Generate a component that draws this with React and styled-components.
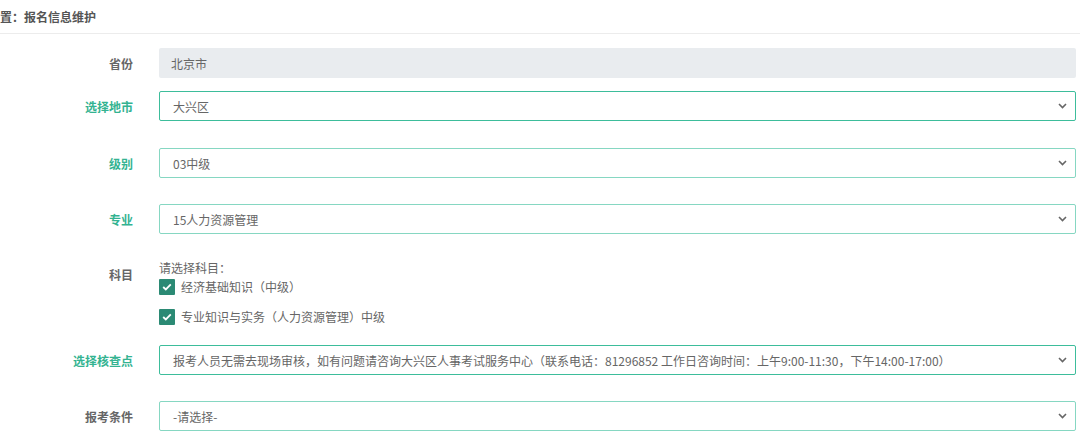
import React from 'react'
import styled, { createGlobalStyle } from 'styled-components'

const GlobalStyle = createGlobalStyle`
  body {
    margin: 0;
    background: #fff;
    font-family: "Noto Sans CJK SC", "Noto Sans", sans-serif;
    font-size: 12px;
    color: #555;
    text-spacing-trim: space-all;
  }
`

const Page = styled.div`
  width: 1080px;
  height: 444px;
  overflow: hidden;
`

const Crumb = styled.div`
  height: 33px;
  border-bottom: 1px solid #ececec;
  display: flex;
  align-items: center;
  font-size: 12px;
  font-weight: bold;
  color: #555;
  white-space: nowrap;
`

const Form = styled.div`
  padding-top: 14px;
  padding-right: 4px;
`

const Row = styled.div`
  display: flex;
  align-items: ${p => (p.$top ? 'flex-start' : 'center')};
  margin-bottom: ${p => p.$mb ?? 26}px;
`

const Label = styled.div`
  width: 133px;
  flex-shrink: 0;
  text-align: right;
  font-weight: bold;
  font-size: 12px;
  color: ${p => (p.$green ? '#34b391' : '#666')};
  padding-top: ${p => p.$pt || 0}px;
  margin-right: 26px;
`

const Input = styled.div`
  flex: 1;
  height: 30px;
  box-sizing: border-box;
  background: #e9ecef;
  border-radius: 2px;
  display: flex;
  align-items: center;
  padding: 0 12px;
  color: #666;
`

const Select = styled.div`
  flex: 1;
  height: 30px;
  box-sizing: border-box;
  border: 1.5px solid ${p => (p.$strong ? '#3dbd9b' : '#86d7c2')};
  border-radius: 2px;
  display: flex;
  align-items: center;
  justify-content: space-between;
  padding: 0 8px 0 13px;
  color: #666;
  white-space: nowrap;
`

const Chevron = () => (
  <svg width="9" height="6" viewBox="0 0 9 6">
    <path d="M1 1 L4.5 4.5 L8 1" fill="none" stroke="#666" strokeWidth="1.6" />
  </svg>
)

const Subjects = styled.div`
  display: flex;
  flex-direction: column;
`

const Hint = styled.div`
  color: #666;
  line-height: 16px;
  height: 16px;
`

const Check = styled.label`
  display: flex;
  align-items: center;
  gap: 6px;
  height: 16px;
  line-height: 16px;
  margin-top: ${p => p.$mt || 0}px;
  color: #666;
`

const Box = styled.span`
  width: 16px;
  height: 16px;
  background: #2b8a74;
  border-radius: 1px;
  display: flex;
  align-items: center;
  justify-content: center;
`

const Tick = () => (
  <Box>
    <svg width="10" height="8" viewBox="0 0 10 8">
      <path d="M1.2 4 L3.8 6.4 L8.8 1.4" fill="none" stroke="#fff" strokeWidth="1.8" />
    </svg>
  </Box>
)

export default function App() {
  return (
    <Page>
      <GlobalStyle />
      <Crumb>置：报名信息维护</Crumb>
      <Form>
        <Row $mb={13}>
          <Label>省份</Label>
          <Input>北京市</Input>
        </Row>
        <Row $mb={27}>
          <Label $green>选择地市</Label>
          <Select $strong>大兴区<Chevron /></Select>
        </Row>
        <Row>
          <Label $green>级别</Label>
          <Select>03中级<Chevron /></Select>
        </Row>
        <Row>
          <Label $green>专业</Label>
          <Select>15人力资源管理<Chevron /></Select>
        </Row>
        <Row $top $mb={20}>
          <Label $pt={6}>科目</Label>
          <Subjects>
            <Hint>请选择科目：</Hint>
            <Check $mt={3}><Tick />经济基础知识（中级）</Check>
            <Check $mt={14}><Tick />专业知识与实务（人力资源管理）中级</Check>
          </Subjects>
        </Row>
        <Row>
          <Label $green>选择核查点</Label>
          <Select $strong>
            报考人员无需去现场审核，如有问题请咨询大兴区人事考试服务中心（联系电话：81296852 工作日咨询时间：上午9:00-11:30，下午14:00-17:00）
            <Chevron />
          </Select>
        </Row>
        <Row>
          <Label>报考条件</Label>
          <Select>-请选择-<Chevron /></Select>
        </Row>
      </Form>
    </Page>
  )
}
